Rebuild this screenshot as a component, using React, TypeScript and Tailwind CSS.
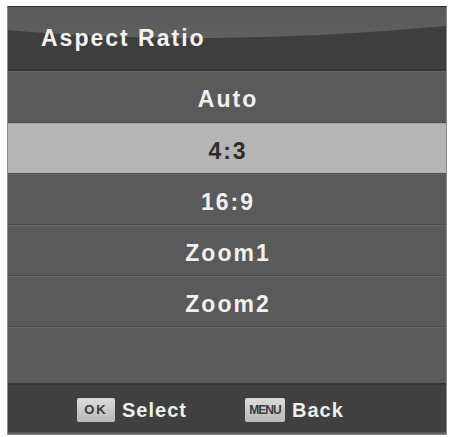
import React from "react";

const items = ["Auto", "4:3", "16:9", "Zoom1", "Zoom2"];
const selected = "4:3";

const Key = ({ label, wide }: { label: string; wide?: boolean }) => (
  <span
    className={`flex items-center justify-center h-[24px] rounded-[2px] bg-gradient-to-b from-[#dcdcdc] to-[#b9b9b9] text-[#3a3a3a] font-bold leading-none ${
      wide ? "w-[40px] text-[12px] tracking-[-1px]" : "w-[38px] text-[13px] tracking-[2px]"
    }`}
  >
    {label}
  </span>
);

export default function App() {
  return (
    <div className="w-[451px] h-[437px] bg-white pl-[7px] pt-[6px] font-['Liberation_Sans',Arial,sans-serif]">
      <div className="w-[440px] h-[429px] flex flex-col border border-[#8a8a8a] border-t-[#2c2c2c] bg-[#5b5b5b]">
        {/* title bar with gloss */}
        <div className="relative h-[64px] bg-[#3e3e3e] border-b-2 border-[#333333] flex items-center pl-[33px]">
          <svg className="absolute inset-0" width="438" height="62" viewBox="0 0 438 62" preserveAspectRatio="none">
            <defs>
              <linearGradient id="gloss" x1="0" y1="0" x2="0" y2="1">
                <stop offset="0" stopColor="#595959" />
                <stop offset="1" stopColor="#606060" />
              </linearGradient>
            </defs>
            <path d="M0 0 H438 V19 Q320 30 200 31 Q90 31 0 23 Z" fill="url(#gloss)" />
          </svg>
          <span className="relative text-[23px] font-bold tracking-[2px] text-[#f2f2f2]">
            Aspect Ratio
          </span>
        </div>

        {items.map((item, i) => {
          const active = item === selected;
          return (
            <div
              key={item}
              className={`flex items-center justify-center pt-[5px] border-b border-[#4c4c4c] ${
                i === 0 ? "h-[52px]" : "h-[51px]"
              } ${
                active
                  ? "bg-[#b5b5b5] text-[#2e2e2e] border-t border-t-[#a8a8a8]"
                  : "bg-[#5a5a5a] text-[#f0f0f0] border-t border-t-[#666666]"
              }`}
            >
              <span className="text-[23px] font-bold tracking-[2px] pl-[2px]">{item}</span>
            </div>
          );
        })}

        <div className="h-[56px] bg-[#5b5b5b] border-t border-[#666666]" />

        <div className="h-[49px] bg-[#404040] border-t-2 border-[#353535] flex items-center pl-[69px] pt-[2px]">
          <div className="flex items-center gap-[7px]">
            <Key label="OK" />
            <span className="text-[20px] font-bold tracking-[1px] text-[#eeeeee]">Select</span>
          </div>
          <div className="flex items-center gap-[7px] ml-[58px]">
            <Key label="MENU" wide />
            <span className="text-[20px] font-bold tracking-[1px] text-[#eeeeee]">Back</span>
          </div>
        </div>
      </div>
    </div>
  );
}
